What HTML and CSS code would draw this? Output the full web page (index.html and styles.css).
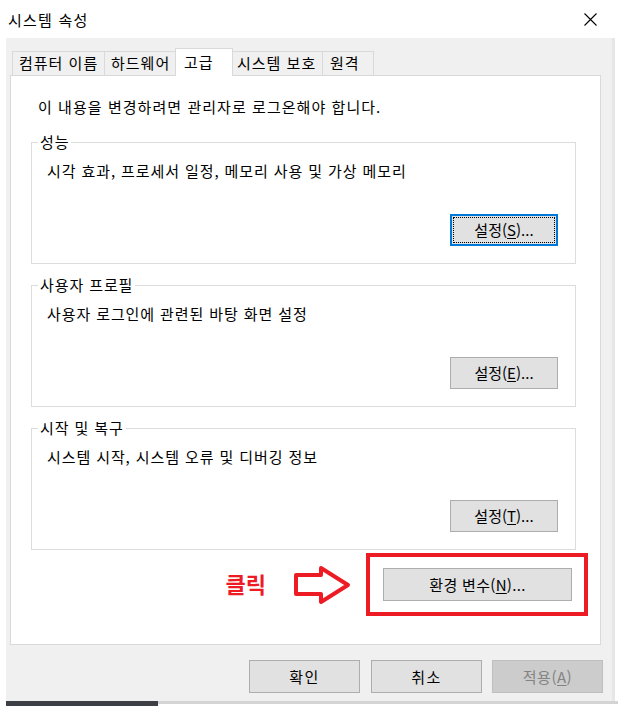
FILE: index.html
```html
<!DOCTYPE html>
<html lang="ko">
<head>
<meta charset="utf-8">
<title>시스템 속성</title>
<link rel="stylesheet" href="styles.css">
</head>
<body>
<div class="window">
  <div class="titlebar">
    <span class="title">시스템 속성</span>
    <svg class="close" width="13" height="13" viewBox="0 0 13 13"><path d="M0.5 0.5 L12.5 12.5 M12.5 0.5 L0.5 12.5" stroke="#000" stroke-width="1.1" fill="none"/></svg>
  </div>
  <div class="body">
    <div class="tabs">
      <div class="tab t-name">컴퓨터 이름</div>
      <div class="tab t-hw">하드웨어</div>
      <div class="tab active">고급</div>
      <div class="tab t-prot">시스템 보호</div>
      <div class="tab t-remote">원격</div>
    </div>
    <div class="panel">
      <p class="notice">이 내용을 변경하려면 관리자로 로그온해야 합니다.</p>
      <div class="group">
        <span class="legend">성능</span>
        <p class="gtext">시각 효과, 프로세서 일정, 메모리 사용 및 가상 메모리</p>
        <button class="btn set focused"><span class="focus-ring">설정(<u>S</u>)...</span></button>
      </div>
      <div class="group">
        <span class="legend">사용자 프로필</span>
        <p class="gtext">사용자 로그인에 관련된 바탕 화면 설정</p>
        <button class="btn set">설정(<u>E</u>)...</button>
      </div>
      <div class="group">
        <span class="legend">시작 및 복구</span>
        <p class="gtext">시스템 시작, 시스템 오류 및 디버깅 정보</p>
        <button class="btn set">설정(<u>T</u>)...</button>
      </div>
      <div class="env-row">
        <span class="click-label">클릭</span>
        <svg class="arrow" width="58" height="40" viewBox="0 0 58 40"><path d="M2 10 H27 V3 L54 20 L27 37 V29 H2 Z" fill="none" stroke="#ed1c24" stroke-width="4" stroke-linejoin="round"/></svg>
        <div class="highlight">
          <button class="btn env">환경 변수(<u>N</u>)...</button>
        </div>
      </div>
    </div>
    <div class="footer">
      <button class="btn foot">확인</button>
      <button class="btn foot">취소</button>
      <button class="btn foot disabled">적용(<u>A</u>)</button>
    </div>
  </div>
  <div class="shadow"><div class="shadow-dark"></div></div>
</div>
</body>
</html>
```
FILE: styles.css
```css
* { box-sizing: border-box; }
html, body {
  margin: 0;
  padding: 0;
}
body {
  width: 625px;
  height: 716px;
  overflow: hidden;
  background: #ffffff;
  font-family: "Noto Sans CJK KR", "Noto Sans", sans-serif;
  font-size: 15px;
  line-height: 20px;
  letter-spacing: 0.9px;
  color: #000;
}
p { margin: 0; }

.window {
  width: 625px;
  display: flex;
  flex-direction: column;
}

.titlebar {
  width: 612px;
  height: 38px;
  background: #fff;
  display: flex;
  align-items: center;
  justify-content: space-between;
  padding: 2px 15px 0 8px;
}
.title { font-size: 15px; letter-spacing: 1.2px; }
.close { display: block; margin-top: -1px; }

.body {
  width: 609px;
  margin-left: 6px;
  height: 663px;
  background: #f0f0f0;
  border-right: 3px solid #e6e6e6;
  padding: 10px 11px 0 4px;
  display: flex;
  flex-direction: column;
}

.tabs {
  display: flex;
  align-items: flex-end;
  height: 27px;
  padding-left: 2px;
  position: relative;
  z-index: 1;
}
.tab {
  height: 24px;
  border: 1px solid #d9d9d9;
  border-bottom: none;
  background: #f0f0f0;
  line-height: 22px;
  padding: 0 6px;
  white-space: nowrap;
  letter-spacing: 1px;
}
.tab + .tab { margin-left: -1px; }
.t-name { width: 93px; }
.t-hw { width: 72px; }
.tab.active {
  height: 28px;
  width: 58px;
  margin-bottom: -1px;
  background: #fff;
  padding: 2px 8px 0 8px;
  line-height: 22px;
}
.t-prot { width: 91px; padding-left: 4px; margin-left: -1px; }
.t-remote { width: 52px; padding-left: 7px; }

.panel {
  height: 570px;
  background: #fff;
  border: 1px solid #d9d9d9;
  padding: 21px 12px 0 20px;
  display: flex;
  flex-direction: column;
}
.notice {
  padding-left: 7px;
  margin-bottom: 25px;
  letter-spacing: 1.05px;
}

.group {
  position: relative;
  width: 545px;
  border: 1px solid #dcdcdc;
  padding: 18px 17px 17px 15px;
  display: flex;
  flex-direction: column;
}
.group + .group { margin-top: 21px; }
.legend {
  position: absolute;
  left: 6px;
  top: -11px;
  background: #fff;
  padding: 0 2px;
  line-height: 20px;
}
.gtext { height: 20px; }

.btn {
  font-family: inherit;
  font-size: 15px;
  color: #000;
  background: #e1e1e1;
  border: 1px solid #adadad;
  padding: 0;
  margin: 0;
  line-height: 20px;
  letter-spacing: 0;
  display: flex;
  align-items: center;
  justify-content: center;
}
.btn u { text-decoration-thickness: 1px; text-underline-offset: 2px; }
.set {
  align-self: flex-end;
  width: 108px;
  height: 32px;
  margin-top: 33px;
}
.focused {
  border: 2px solid #0078d7;
  padding: 1px;
}
.focus-ring {
  width: 100%;
  height: 100%;
  border: 1px dotted #000;
  display: flex;
  align-items: center;
  justify-content: center;
}

.env-row {
  display: flex;
  justify-content: flex-end;
  align-items: center;
  margin-top: 3px;
}
.click-label {
  color: #ed1c24;
  font-weight: bold;
  font-size: 22px;
  line-height: 26px;
  letter-spacing: 0;
  margin-right: 28px;
  margin-top: -4px;
}
.arrow { display: block; margin-right: 14px; }
.highlight {
  border: 4px solid #ed1c24;
  padding: 11px 12px 11px 13px;
}
.env {
  width: 189px;
  height: 33px;
  letter-spacing: 0.3px;
}

.footer {
  display: flex;
  justify-content: flex-end;
  margin-top: 15px;
  margin-right: -2px;
  gap: 11px;
}
.foot {
  width: 111px;
  height: 33px;
  letter-spacing: 1.5px;
}
.foot + .foot.disabled { margin-left: -1px; }
.disabled {
  background: #cccccc;
  border-color: #bfbfbf;
  color: #838383;
  letter-spacing: 0.5px;
}

.shadow {
  width: 612px;
  margin-left: 6px;
  height: 5px;
  display: flex;
  background: linear-gradient(#d4d4d4 0 3px, #fff 3px);
}
.shadow-dark {
  width: 152px;
  height: 5px;
  background: #3c3f43;
}
```
